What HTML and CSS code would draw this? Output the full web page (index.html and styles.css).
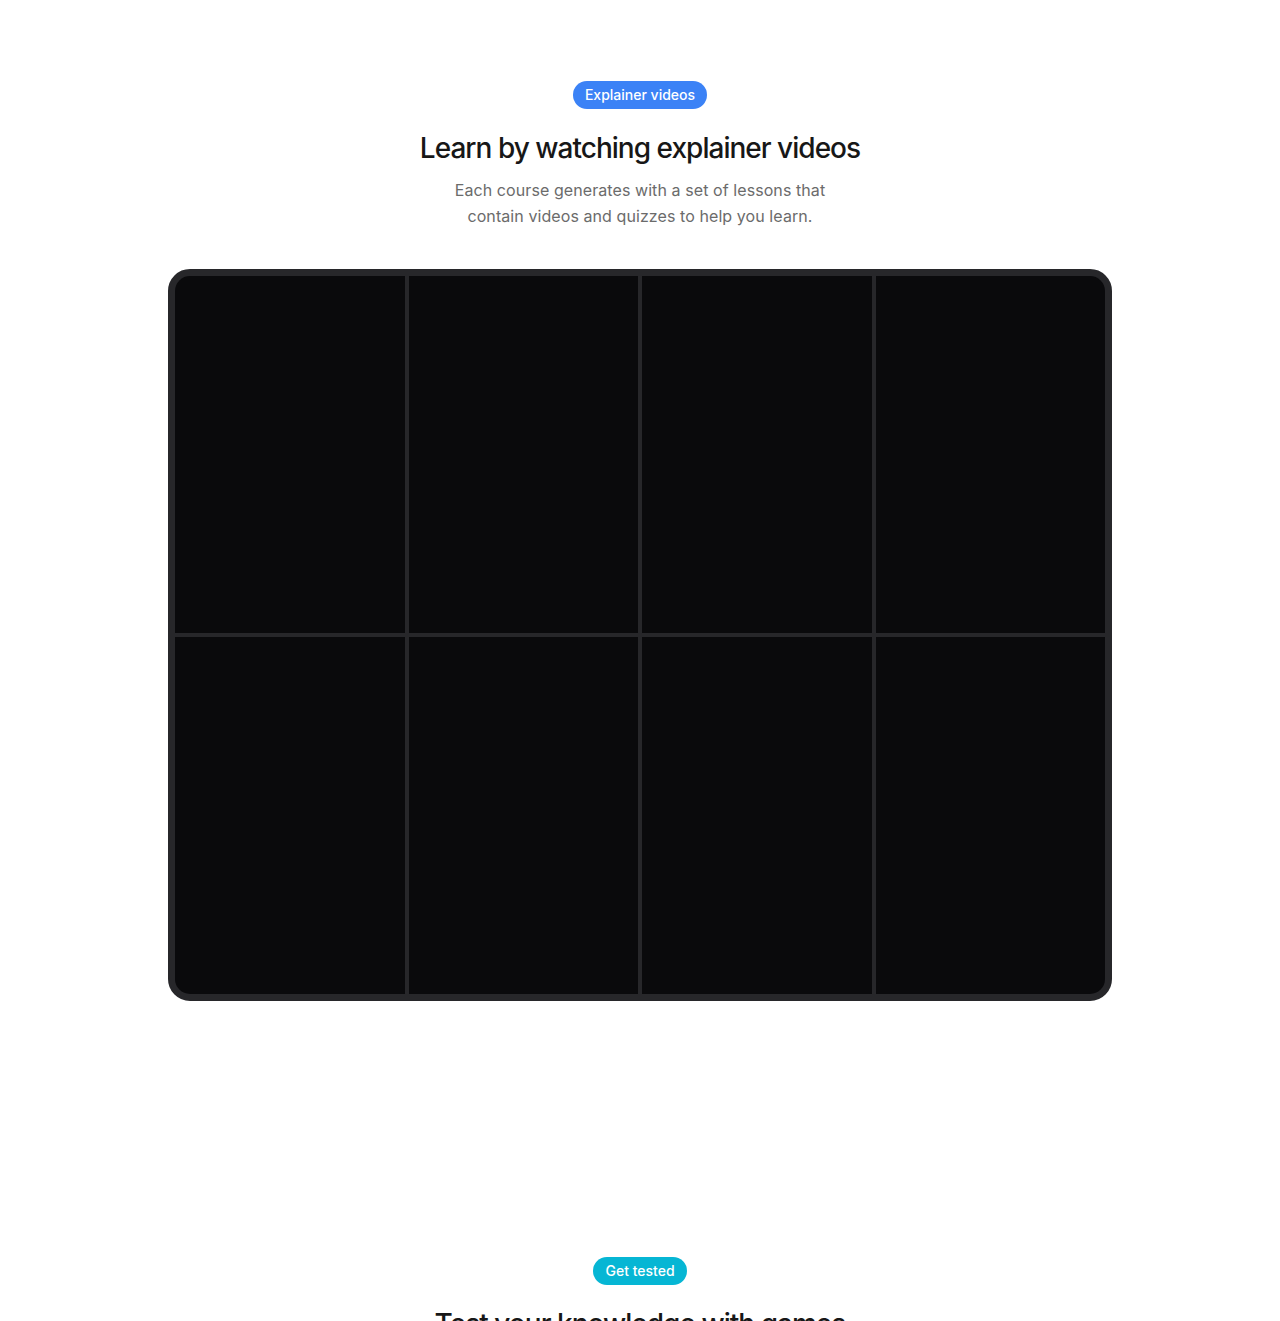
FILE: index.html
```html
<!DOCTYPE html>
<html lang="en">
<head>
<meta charset="utf-8">
<title>Explainer videos</title>
<link rel="stylesheet" href="styles.css">
</head>
<body>
  <section class="section first">
    <span class="badge badge-blue">Explainer videos</span>
    <h2 class="title">Learn by watching explainer videos</h2>
    <p class="lead">Each course generates with a set of lessons that contain videos and quizzes to help you learn.</p>
    <div class="frame">
      <div class="grid">
        <div class="cell"></div>
        <div class="cell"></div>
        <div class="cell"></div>
        <div class="cell"></div>
        <div class="cell"></div>
        <div class="cell"></div>
        <div class="cell"></div>
        <div class="cell"></div>
      </div>
    </div>
  </section>
  <section class="section second">
    <span class="badge badge-cyan">Get tested</span>
    <h2 class="title">Test your knowledge with games</h2>
  </section>
</body>
</html>
```
FILE: styles.css
```css
* { box-sizing: border-box; }
html, body { margin: 0; padding: 0; background: #ffffff; }
body {
  font-family: Inter, "Noto Sans", "Liberation Sans", sans-serif;
  color: #171717;
  height: 1321px;
  overflow: hidden;
}
.section {
  display: flex;
  flex-direction: column;
  align-items: center;
}
.first { padding-top: 81px; }
.second { padding-top: 256px; }
.badge {
  display: inline-flex;
  align-items: center;
  height: 28px;
  padding: 0 12px;
  border-radius: 999px;
  color: #ffffff;
  font-size: 14px;
  font-weight: 500;
  line-height: 1;
}
.badge-blue { background: #3b82f6; }
.badge-cyan { background: #06b6d4; }
.title {
  margin: 21px 0 0;
  font-size: 28px;
  line-height: 36px;
  font-weight: 500;
  letter-spacing: -0.035em;
  color: #171717;
}
.lead {
  margin: 11px 0 0;
  max-width: 384px;
  text-align: center;
  font-size: 16px;
  line-height: 26px;
  color: #6b6b6b;
  letter-spacing: 0.005em;
}
.frame {
  margin-top: 40px;
  width: 944px;
  height: 732px;
  border: 7px solid #27272a;
  border-radius: 22px;
  background: #27272a;
  overflow: hidden;
}
.grid {
  display: grid;
  grid-template-columns: repeat(4, 1fr);
  grid-template-rows: repeat(2, 1fr);
  gap: 4px;
  height: 100%;
}
.cell { background: #0a0a0c; }
```
